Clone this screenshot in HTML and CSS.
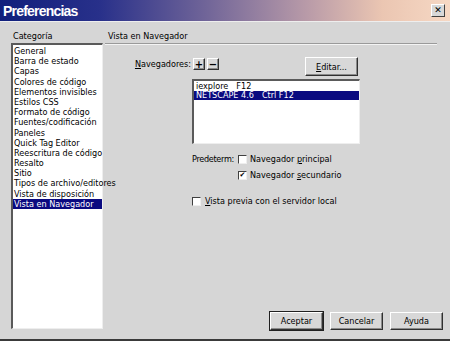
FILE: index.html
```html
<!DOCTYPE html>
<html>
<head>
	<meta charset="UTF-8">
	<title>Preferencias</title>
	<link rel="stylesheet" href="styles.css">
</head>
<body>
	<div class="window">
		<div class="titlebar">
			<span class="title">Preferencias</span>
			<span class="close">&#x2715;</span>
		</div>
		<div class="main">
			<!-- category list -->
			<div class="sidebar">
				<div class="cat-label">Categoría</div>
				<div class="listbox cat-list">
					<div class="item">General</div>
					<div class="item">Barra de estado</div>
					<div class="item">Capas</div>
					<div class="item">Colores de código</div>
					<div class="item">Elementos invisibles</div>
					<div class="item">Estilos CSS</div>
					<div class="item">Formato de código</div>
					<div class="item">Fuentes/codificación</div>
					<div class="item">Paneles</div>
					<div class="item">Quick Tag Editor</div>
					<div class="item">Reescritura de código</div>
					<div class="item">Resalto</div>
					<div class="item">Sitio</div>
					<div class="item">Tipos de archivo/editores</div>
					<div class="item">Vista de disposición</div>
					<div class="item selected">Vista en Navegador</div>
				</div>
			</div>
			<!-- settings panel -->
			<div class="panel">
				<div class="panel-title">Vista en Navegador</div>
				<div class="rule"></div>

				<div class="browsers-row">
					<span class="row-label"><u>N</u>avegadores:</span>
					<span class="btn small">+</span>
					<span class="btn small">&minus;</span>
					<span class="btn edit"><u>E</u>ditar...</span>
				</div>

				<div class="listbox browser-list">
					<div class="item"><span class="b-name">iexplore</span>F12</div>
					<div class="item selected"><span class="b-name">NETSCAPE 4.6</span>Ctrl F12</div>
				</div>

				<div class="default-grid">
					<span class="def-label">Predeterm:</span>
					<span class="check"></span>
					<span>Navegador <u>p</u>rincipal</span>
					<span></span>
					<span class="check checked">&#x2714;</span>
					<span>Navegador <u>s</u>ecundario</span>
				</div>

				<div class="preview-row">
					<span class="check"></span>
					<span><u>V</u>ista previa con el servidor local</span>
				</div>

				<div class="footer">
					<span class="btn wide default">Aceptar</span>
					<span class="btn wide">Cancelar</span>
					<span class="btn wide">Ayuda</span>
				</div>
			</div>
		</div>
	</div>
</body>
</html>
```

FILE: styles.css
```css
body {
	margin:0;
	background-color:#ffffff;
	font-family:"DejaVu Sans Condensed", "Liberation Sans", sans-serif;
	font-size:9px;
	color:#000000;
}
.window {
	width:450px;
	height:339px;
	background-color:#d6d6d6;
	border-bottom:2px solid #3a3a3a;
	display:flex;
	flex-direction:column;
}
.titlebar {
	height:21px;
	background:linear-gradient(to right, #10207c 0%, #28308a 22%, #6e6398 45%, #b89aa8 68%, #ebc6b2 85%, #f6d8c4 100%);
	display:flex;
	align-items:center;
	justify-content:space-between;
	padding:0 5px 0 3px;
	border-bottom:1px solid #eeeeee;
}
.title {
	color:#ffffff;
	font-family:"Liberation Sans", sans-serif;
	font-weight:bold;
	font-size:14px;
	letter-spacing:-0.8px;
}
.close {
	width:12px;
	height:11px;
	background-color:#d8d8d8;
	border:1px solid;
	border-color:#ffffff #404040 #404040 #ffffff;
	font-size:9px;
	font-weight:bold;
	line-height:11px;
	text-align:center;
	font-family:"DejaVu Sans", sans-serif;
}
.main {
	flex:1;
	display:flex;
}
.sidebar {
	margin-left:11px;
	width:92px;
	display:flex;
	flex-direction:column;
}
.cat-label {
	margin-top:9px;
	margin-left:2px;
	height:12px;
}
.listbox {
	background-color:#ffffff;
	border-top:2px solid #5a5a5a;
	border-left:2px solid #5a5a5a;
	border-right:1px solid #eeeeee;
	border-bottom:1px solid #eeeeee;
}
.cat-list {
	height:282px;
	padding-top:1px;
}
.item {
	line-height:10.2px;
	height:10.2px;
	padding-left:1px;
	white-space:nowrap;
}
.item.selected {
	background-color:#0a0a80;
	color:#ffffff;
}
.panel {
	flex:1;
	margin-left:2px;
	margin-right:10px;
	display:flex;
	flex-direction:column;
}
.panel-title {
	margin-top:9px;
	margin-left:3px;
	height:12px;
}
.rule {
	margin-right:3px;
	border-top:1px solid #9a9a9a;
	border-bottom:1px solid #f4f4f4;
}
.browsers-row {
	margin-top:12px;
	display:flex;
	align-items:flex-start;
	height:20px;
}
.row-label {
	width:86px;
	text-align:right;
	padding-right:2px;
	margin-top:2px;
}
.btn {
	background-color:#d8d8d8;
	border:1px solid;
	border-color:#ffffff #303030 #303030 #ffffff;
	box-shadow:inset -1px -1px 0 #8a8a8a;
	display:flex;
	align-items:center;
	justify-content:center;
}
.btn.small {
	width:10px;
	height:10px;
	margin-top:1px;
	margin-right:2px;
	font-weight:bold;
	font-size:11px;
}
.btn.edit {
	width:51px;
	height:17px;
	margin-left:84px;
}
.browser-list {
	margin-left:87px;
	margin-top:2px;
	width:165px;
	height:61px;
	padding-top:1px;
}
.browser-list .item {
	height:8.8px;
	line-height:8.8px;
	padding-left:2px;
}
.b-name {
	margin-right:8px;
}
.default-grid {
	margin-top:10px;
	margin-left:87px;
	display:grid;
	grid-template-columns:46px 12px auto;
	row-gap:6px;
	align-items:center;
}
.def-label {
	letter-spacing:-0.3px;
}
.check {
	width:7px;
	height:7px;
	background-color:#ffffff;
	border-top:1px solid #404040;
	border-left:1px solid #404040;
	border-right:1px solid #eeeeee;
	border-bottom:1px solid #eeeeee;
	font-size:7px;
	line-height:7px;
	text-align:center;
	font-family:"DejaVu Sans", sans-serif;
}
.preview-row {
	margin-top:16px;
	margin-left:87px;
	display:flex;
	align-items:center;
	gap:4px;
}
.footer {
	margin-top:auto;
	margin-bottom:9px;
	display:flex;
	justify-content:flex-end;
	gap:7px;
	margin-right:-3px;
}
.btn.wide {
	width:51px;
	height:16px;
}
.btn.default {
	outline:1px solid #202020;
}
```
